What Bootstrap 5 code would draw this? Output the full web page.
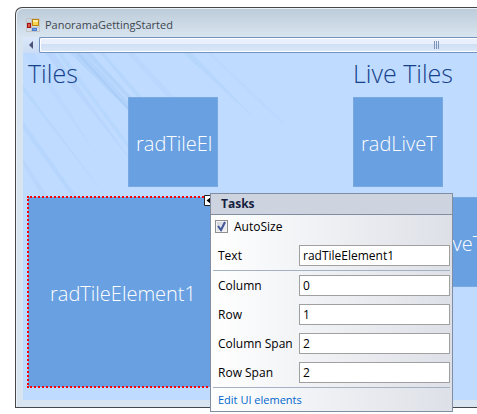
<!DOCTYPE html>
<html lang="en">
<head>
<meta charset="utf-8">
<meta name="viewport" content="width=device-width, initial-scale=1">
<title>PanoramaGettingStarted</title>
<link href="https://cdn.jsdelivr.net/npm/bootstrap@5.3.0/dist/css/bootstrap.min.css" rel="stylesheet">
<style>
body { font: 12px/16px "Open Sans", "Noto Sans", sans-serif; color: #000; background: #fff; overflow: hidden; }
.designer { padding: 7px 0 0 15px; min-height: 100vh; }
.app-window { border: 1px solid #46474b; border-right: 0; border-radius: 7px 0 0 0; background: linear-gradient(#bccbd8, #d8e5f1 29px); box-shadow: inset 1px 1px #eaf1f8; padding: 0 0 7px 7px; }
.title-bar { height: 29px; padding: 5px 0 0 3px; gap: 5px; color: #3f464d; font-size: 11px; }
.scroll-bar { height: 16px; background: #d3e1f5; }
.scroll-arrow { width: 16px; background: linear-gradient(#dbe8fa, #cbdcf4); }
.scroll-thumb { border: 1px solid #7391bd; border-right: 0; border-radius: 2px 0 0 2px; box-shadow: inset 1px 1px #fff, inset 0 -1px #fff; background: linear-gradient(#e9effb 6px, #cfdff4 6px, #dce8f8); padding-right: 37px; }
.canvas { background: #bfdbff; padding: 5px 0 13px 5px; gap: 135px; min-height: 347px; }
.streaks { left: 0; top: 0; width: 260px; height: 200px; }
.group-title { font-size: 25px; line-height: 31px; font-weight: 300; color: #15428b; height: 39px; margin: 0; white-space: nowrap; }
.tile-grid { display: grid; grid-template-rows: repeat(3, 90px); gap: 10px; }
.two-cols { grid-template-columns: repeat(2, 90px); }
.three-cols { grid-template-columns: repeat(3, 90px); }
.tile { background: #69a0e1; border: 1px solid #76a8e2; color: #fff; font-size: 20px; line-height: 30px; font-weight: 300; padding: 3px 7px 0; white-space: nowrap; }
.tile-second { grid-column: 2; }
.tile-big { grid-column: 1 / 3; grid-row: 2 / 4; border: 0; outline: 2px dotted #f00; outline-offset: -1px; }
.tile-wide { grid-column: 1 / 4; grid-row: 2; }
.glyph { left: 204px; top: 195px; }
.tasks { left: 210px; top: 193px; width: 243px; border: 1px solid #828da2; background: linear-gradient(90deg, #fff, #dde0e7); }
.tasks-title { font-size: 12px; line-height: 20px; height: 21px; margin: 0; padding-left: 10px; background: #ced4df; border-bottom: 1px solid #828da2; color: #15213f; }
.check-row { height: 30px; padding: 0 0 7px 4px; gap: 6px; }
.check-box { appearance: none; width: 13px; height: 13px; margin: 0; border: 1px solid #8e8f8f; background: linear-gradient(135deg, #cdd2da, #f6f6f6); box-shadow: inset 0 0 0 1px #f4f4f4; }
.check-mark { left: 1px; top: 0; pointer-events: none; }
.fields { gap: 8px; padding: 0 2px 4px 7px; }
.field-label { width: 81px; padding-top: 1px; }
.field-input { height: 21px; min-width: 0; width: 0; border: 1px solid #a0a0a0; padding: 0 3px 1px; font-size: 12px; line-height: 16px; background: #fff; color: #000; }
.divider { height: 1px; background: #a3b1c2; margin: 0 2px; }
.edit-link { color: #0066cc; font-size: 11px; line-height: 23px; padding-left: 7px; }
</style>
<script src="https://cdn.jsdelivr.net/npm/bootstrap@5.3.0/dist/js/bootstrap.bundle.min.js"></script>
</head>
<body>
<main class="designer position-relative">
  <section class="app-window overflow-hidden">
    <header class="title-bar d-flex align-items-center">
      <svg width="14" height="14" viewBox="0 0 14 14" aria-hidden="true">
        <path d="M.5.5h13v13H.5zM5.500.5v13M.5 4.500h5M5.500 9.500h8" fill="none" stroke="#c4c4c4"/>
        <rect x="6.500" y="1.500" width="6" height="6" fill="#fbd34d" stroke="#bb8411"/>
        <path d="M7 2h5v2H7z" fill="#fff0a8"/>
        <rect x="1.500" y="5.500" width="3" height="4" fill="#d75a50" stroke="#a31212"/>
        <rect x="6.500" y="10.500" width="4" height="2" fill="#7ca9ee" stroke="#477bd1"/>
      </svg>
      <span>PanoramaGettingStarted</span>
    </header>
    <div class="scroll-bar d-flex">
      <button type="button" class="scroll-arrow border-0 p-0 d-flex align-items-center justify-content-center" aria-label="Scroll left">
        <svg width="4" height="8" viewBox="0 0 4 8"><path d="M4 0v8L0 4z" fill="#4a5278"/></svg>
      </button>
      <div class="scroll-thumb flex-grow-1 d-flex align-items-center justify-content-end">
        <svg width="6" height="8" viewBox="0 0 6 8"><path d="M.5 0v8M2.500 0v8M4.500 0v8" stroke="#7d93b8"/></svg>
      </div>
    </div>
    <div class="canvas d-flex position-relative overflow-hidden">
      <svg class="streaks position-absolute" viewBox="0 0 260 200" aria-hidden="true">
        <g fill="#8fbcf0">
          <path d="M0 0h10l62 100z" opacity=".08"/>
          <path d="M0 32l84 113L0 38z" opacity=".14"/>
          <path d="M0 68l54 76h-5L0 76z" opacity=".15"/>
          <path d="M0 105l26 40h-6L0 112z" opacity=".13"/>
          <path d="M22 0h9l85 118z" opacity=".16"/>
          <path d="M34 0h5l72 98-2 3z" opacity=".12"/>
          <path d="M47 0h14l46 50v9z" opacity=".22"/>
          <path d="M53 0h3l51 56v3z" opacity=".25"/>
          <path d="M62 0h6l44 48h-5z" opacity=".24"/>
          <path d="M77 0h4l38 44h-5z" opacity=".17"/>
          <path d="M104 0h7l42 46h-7z" opacity=".11"/>
          <path d="M160 0h9l62 65z" opacity=".17"/>
          <path d="M185 0h3l72 68v4z" opacity=".08"/>
        </g>
      </svg>
      <section class="position-relative">
        <h1 class="group-title">Tiles</h1>
        <div class="tile-grid two-cols">
          <div class="tile tile-second d-flex align-items-center">radTileEl</div>
          <div class="tile tile-big d-flex align-items-center justify-content-center">radTileElement1</div>
        </div>
      </section>
      <section class="position-relative">
        <h1 class="group-title">Live Tiles</h1>
        <div class="tile-grid three-cols">
          <div class="tile d-flex align-items-center">radLiveT</div>
          <div class="tile tile-wide d-flex align-items-center justify-content-center">radLiveTileElement2</div>
        </div>
      </section>
    </div>
  </section>

  <svg class="glyph position-absolute" width="11" height="11" viewBox="0 0 11 11" aria-hidden="true">
    <path d="M.5.5h10v10H.5z" fill="#fff" stroke="#222"/><path d="M7 2v7L2.500 5.500z"/>
  </svg>
  <form class="tasks position-absolute">
    <h2 class="tasks-title fw-bold">Tasks</h2>
    <div class="check-row d-flex align-items-center">
      <div class="position-relative d-flex">
        <input class="check-box" type="checkbox" id="autosize" checked>
        <svg class="check-mark position-absolute" width="11" height="12" viewBox="0 0 11 12"><path d="M2 6l3 4 4-8" fill="none" stroke="#3f5397" stroke-width="2"/></svg>
      </div>
      <label for="autosize">AutoSize</label>
    </div>
    <div class="fields d-flex flex-column">
      <div class="d-flex align-items-center"><label class="field-label flex-shrink-0" for="text">Text</label><input class="field-input flex-grow-1" id="text" value="radTileElement1"></div>
    </div>
    <div class="divider"></div>
    <div class="fields d-flex flex-column pt-1">
      <div class="d-flex align-items-center"><label class="field-label flex-shrink-0" for="column">Column</label><input class="field-input flex-grow-1" id="column" value="0"></div>
      <div class="d-flex align-items-center"><label class="field-label flex-shrink-0" for="row-index">Row</label><input class="field-input flex-grow-1" id="row-index" value="1"></div>
      <div class="d-flex align-items-center"><label class="field-label flex-shrink-0" for="column-span">Column Span</label><input class="field-input flex-grow-1" id="column-span" value="2"></div>
      <div class="d-flex align-items-center"><label class="field-label flex-shrink-0" for="row-span">Row Span</label><input class="field-input flex-grow-1" id="row-span" value="2"></div>
    </div>
    <div class="divider"></div>
    <a class="edit-link d-block text-decoration-none" href="#">Edit UI elements</a>
  </form>
</main>
</body>
</html>
